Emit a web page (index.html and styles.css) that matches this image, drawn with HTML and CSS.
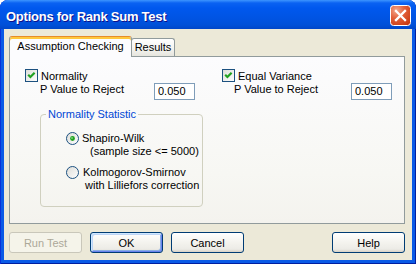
FILE: index.html
```html
<!DOCTYPE html>
<html lang="en">
<head>
    <meta charset="UTF-8">
    <title>Options for Rank Sum Test</title>
    <link rel="stylesheet" href="styles.css">
</head>
<body>
  <div class="window">
    <div class="titlebar">
      <span class="title">Options for Rank Sum Test</span>
      <div class="close">
        <svg width="21" height="21" viewBox="0 0 21 21">
          <defs>
            <radialGradient id="cg" cx="0.3" cy="0.25" r="0.9">
              <stop offset="0" stop-color="#f3a88e"/>
              <stop offset="0.45" stop-color="#e2603a"/>
              <stop offset="1" stop-color="#c8380f"/>
            </radialGradient>
          </defs>
          <rect x="0.5" y="0.5" width="20" height="20" rx="3" fill="url(#cg)" stroke="#fff"/>
          <path d="M6 6 L15 15 M15 6 L6 15" stroke="#fff" stroke-width="2.3" stroke-linecap="square"/>
        </svg>
      </div>
    </div>

    <div class="client">
      <div class="tabs">
        <div class="tab active">Assumption Checking</div>
        <div class="tab">Results</div>
      </div>

      <div class="page">
        <div class="col">
          <div class="check-row">
            <svg class="checkbox" width="13" height="13" viewBox="0 0 13 13">
              <defs>
                <linearGradient id="bx" x1="0" y1="0" x2="1" y2="1">
                  <stop offset="0" stop-color="#dcdcd7"/>
                  <stop offset="1" stop-color="#ffffff"/>
                </linearGradient>
              </defs>
              <rect x="0.5" y="0.5" width="12" height="12" fill="url(#bx)" stroke="#1c5180"/>
              <path d="M3.2 5.8 L5.4 8 L9.6 3.8" fill="none" stroke="#21a121" stroke-width="2.2"/>
            </svg>
            <span class="check-label">Normality</span>
          </div>
          <div class="value-row">
            <span class="value-label">P Value to Reject</span>
            <input class="value" value="0.050">
          </div>

          <fieldset class="group">
            <legend>Normality Statistic</legend>
            <div class="options">
              <div class="option">
                <svg class="radio" width="13" height="13" viewBox="0 0 13 13">
                  <defs>
                    <linearGradient id="rb" x1="0" y1="0" x2="1" y2="1">
                      <stop offset="0" stop-color="#dcdcd7"/>
                      <stop offset="1" stop-color="#ffffff"/>
                    </linearGradient>
                  </defs>
                  <circle cx="6.5" cy="6.5" r="6" fill="url(#rb)" stroke="#1c5180"/>
                  <circle cx="6.5" cy="6.5" r="2.4" fill="#21a121"/>
                  <circle cx="6" cy="6" r="0.9" fill="#7fd87f"/>
                </svg>
                <div class="option-text">
                  <div>Shapiro-Wilk</div>
                  <div class="sub first">(sample size &lt;= 5000)</div>
                </div>
              </div>
              <div class="option second">
                <svg class="radio" width="13" height="13" viewBox="0 0 13 13">
                  <circle cx="6.5" cy="6.5" r="6" fill="url(#rb)" stroke="#1c5180"/>
                </svg>
                <div class="option-text">
                  <div>Kolmogorov-Smirnov</div>
                  <div class="sub">with Lilliefors correction</div>
                </div>
              </div>
            </div>
          </fieldset>
        </div>

        <div class="col">
          <div class="check-row">
            <svg class="checkbox" width="13" height="13" viewBox="0 0 13 13">
              <rect x="0.5" y="0.5" width="12" height="12" fill="url(#bx)" stroke="#1c5180"/>
              <path d="M3.2 5.8 L5.4 8 L9.6 3.8" fill="none" stroke="#21a121" stroke-width="2.2"/>
            </svg>
            <span class="check-label">Equal Variance</span>
          </div>
          <div class="value-row right">
            <span class="value-label">P Value to Reject</span>
            <input class="value" value="0.050">
          </div>
        </div>
      </div>

      <div class="buttons">
        <button class="btn" disabled>Run Test</button>
        <button class="btn default">OK</button>
        <button class="btn">Cancel</button>
        <button class="btn help">Help</button>
      </div>
    </div>
  </div>
</body>
</html>
```

FILE: styles.css
```css
html, body {
    margin: 0;
    padding: 0;
    background: #fff;
    font: 11px "Liberation Sans", Arial, sans-serif;
    color: #000;
}

.window {
    width: 416px;
    height: 264px;
    display: flex;
    flex-direction: column;
    background: #0a5ae6;
    border-radius: 8px 8px 0 0;
    box-shadow: inset 1px 0 #0831d9, inset -1px 0 #001ea0, inset 0 -1px #001ea0;
}

/* title bar */
.titlebar {
    height: 29px;
    display: flex;
    justify-content: space-between;
    padding: 0 5px 0 6px;
    border-radius: 8px 8px 0 0;
    background: linear-gradient(#3d95ff 0, #0a62f2 3px, #0058ee 8px, #0054e3 18px, #0050d8 25px, #0046c8 29px);
}

.title {
    margin-top: 9px;
    line-height: 15px;
    height: 15px;
    font: bold 13px "Liberation Sans", Arial, sans-serif;
    letter-spacing: -0.25px;
    color: #fff;
    text-shadow: 1px 1px #0f1089;
}

.close {
    margin-top: 5px;
    width: 21px;
    height: 21px;
}

.close svg {
    display: block;
}

/* client area */
.client {
    flex: 1;
    margin: 0 4px 4px 4px;
    padding: 7px 7px 0 5px;
    background: #ece9d8;
}

.tabs {
    height: 20px;
    display: flex;
    align-items: flex-end;
}

.tab {
    box-sizing: border-box;
    height: 18px;
    width: 44px;
    margin-left: -1px;
    padding-top: 2px;
    line-height: 13px;
    text-align: center;
    border: 1px solid #919b9c;
    border-bottom: none;
    border-radius: 3px 3px 0 0;
    background: linear-gradient(#ffffff, #f3f3ef 60%, #e6e5de);
}

.tab.active {
    position: relative;
    z-index: 1;
    width: 123px;
    height: 21px;
    margin-left: 0;
    margin-right: 0;
    margin-bottom: -1px;
    padding-top: 3px;
    border-top: 1px solid #e68b2c;
    box-shadow: inset 0 2px #ffc83c;
    background: #fcfcfe;
}

.tab.active + .tab {
    margin-left: -1px;
}

.page {
    box-sizing: border-box;
    height: 168px;
    border: 1px solid #919b9c;
    background: linear-gradient(#fcfcfe, #f7f7f3 70%, #f4f3ee);
    display: grid;
    grid-template-columns: 197px 1fr;
    padding: 12px 0 0 15px;
}

.check-row {
    display: flex;
    align-items: flex-start;
    height: 13px;
}

.checkbox, .radio {
    display: block;
    flex: none;
}

.check-label {
    margin-left: 3px;
    margin-top: 1px;
    line-height: 13px;
}

.value-row {
    display: flex;
    align-items: flex-start;
    margin-top: 1px;
    padding-left: 15px;
    line-height: 13px;
}

.value-row .value-label {
    width: 114px;
}

.value-row.right {
    padding-left: 12px;
}

.value-row.right .value-label {
    width: 117px;
}

.value {
    box-sizing: border-box;
    width: 41px;
    height: 17px;
    margin: 0;
    padding: 0 3px 2px 3px;
    border: 1px solid #7f9db9;
    background: #fff;
    font: 11px "Liberation Sans", Arial, sans-serif;
    color: #000;
    outline: none;
}

/* group box */
fieldset.group {
    box-sizing: border-box;
    width: 163px;
    margin: 8px 0 0 15px;
    padding: 0 0 14px 0;
    border: 1px solid #d0d0bf;
    border-radius: 4px;
}

fieldset.group legend {
    margin-left: 5px;
    padding: 0 2px;
    line-height: 13px;
    color: #0046d5;
}

.options {
    padding: 11px 0 0 25px;
}

.option {
    display: flex;
    align-items: flex-start;
}

.option.second {
    margin-top: 8px;
}

.option-text {
    margin-left: 3px;
    line-height: 13px;
}

.option.second .option-text {
    margin-left: 4px;
}

.sub {
    padding-left: 2px;
}

.sub.first {
    padding-left: 8px;
}

/* buttons */
.buttons {
    display: flex;
    gap: 8px;
    margin-top: 8px;
}

.btn {
    box-sizing: border-box;
    width: 73px;
    height: 21px;
    margin: 0;
    padding: 0;
    border: 1px solid #003c74;
    border-radius: 3px;
    background: linear-gradient(#ffffff, #f4f3ee 50%, #ecebe6 85%, #d6d0c5);
    font: 11px "Liberation Sans", Arial, sans-serif;
    color: #000;
}

.btn.default {
    box-shadow: inset 1px 1px #cee7ff, inset -1px -1px #6982ee, inset 2px 2px #bcd4f6, inset -2px -2px #89ade4;
}

.btn:disabled {
    border-color: #c9c7ba;
    background: #f5f4ea;
    color: #aca899;
}

.btn.help {
    margin-left: auto;
}
```
